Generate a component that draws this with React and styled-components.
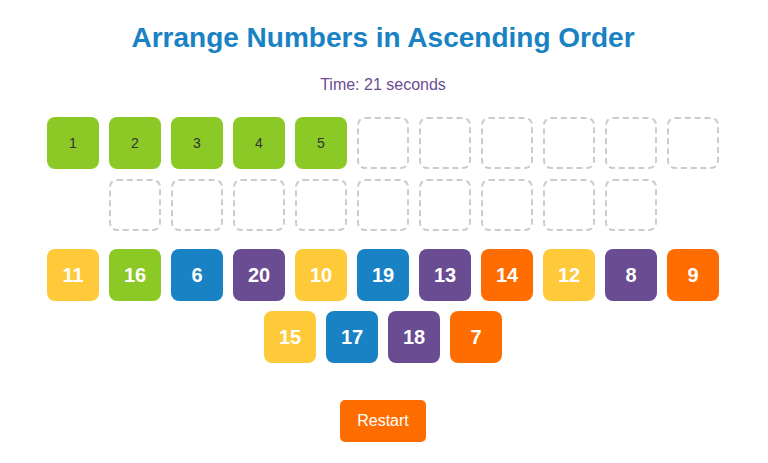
import React from "react";
import styled, { createGlobalStyle } from "styled-components";

const Global = createGlobalStyle`
  html, body { margin: 0; padding: 0; background: #ffffff; }
  body { font-family: "Liberation Sans", Arial, sans-serif; }
`;

const COLORS = {
  yellow: "#ffca3a",
  green: "#8ac926",
  blue: "#1982c4",
  purple: "#6a4c93",
  orange: "#ff6d00",
};

const Page = styled.div`
  display: flex;
  flex-direction: column;
  align-items: center;
  padding: 22px 2px 0 0;
`;

const Title = styled.h1`
  margin: 0;
  font-size: 28px;
  line-height: 32px;
  font-weight: bold;
  color: #1982c4;
  text-align: center;
`;

const Timer = styled.p`
  margin: 22px 0 0;
  font-size: 16px;
  line-height: 18px;
  color: #6a4c93;
`;

const TileGrid = styled.div`
  width: 700px;
  display: flex;
  flex-wrap: wrap;
  justify-content: center;
  gap: 10px;
  margin-top: ${(p) => p.$top}px;
`;

const Slot = styled.div`
  box-sizing: border-box;
  width: 52px;
  height: 52px;
  border-radius: 8px;
  border: 2px dashed #cccccc;
  display: flex;
  align-items: center;
  justify-content: center;
  font-size: 14px;
  color: #333333;
  ${(p) => p.$filled && `border: none; background: ${COLORS.green};`}
`;

const Tile = styled.div`
  width: 52px;
  height: 52px;
  border-radius: 8px;
  background: ${(p) => COLORS[p.$color]};
  display: flex;
  align-items: center;
  justify-content: center;
  font-size: 20px;
  font-weight: bold;
  color: #ffffff;
`;

const RestartButton = styled.button`
  margin-top: 37px;
  padding: 12px 17.5px;
  border: none;
  border-radius: 5px;
  background: #ff6d00;
  color: #ffffff;
  font-family: "Liberation Sans", Arial, sans-serif;
  font-size: 16px;
  line-height: 18px;
  cursor: pointer;
`;

const slots = Array.from({ length: 20 }, (_, i) => (i < 5 ? i + 1 : null));

const pool = [
  [11, "yellow"],
  [16, "green"],
  [6, "blue"],
  [20, "purple"],
  [10, "yellow"],
  [19, "blue"],
  [13, "purple"],
  [14, "orange"],
  [12, "yellow"],
  [8, "purple"],
  [9, "orange"],
  [15, "yellow"],
  [17, "blue"],
  [18, "purple"],
  [7, "orange"],
];

export default function App() {
  return (
    <>
      <Global />
      <Page>
        <Title>Arrange Numbers in Ascending Order</Title>
        <Timer>Time: 21 seconds</Timer>
        <TileGrid $top={23}>
          {slots.map((n, i) => (
            <Slot key={i} $filled={n !== null}>
              {n}
            </Slot>
          ))}
        </TileGrid>
        <TileGrid $top={18}>
          {pool.map(([n, c]) => (
            <Tile key={n} $color={c}>
              {n}
            </Tile>
          ))}
        </TileGrid>
        <RestartButton>Restart</RestartButton>
      </Page>
    </>
  );
}
